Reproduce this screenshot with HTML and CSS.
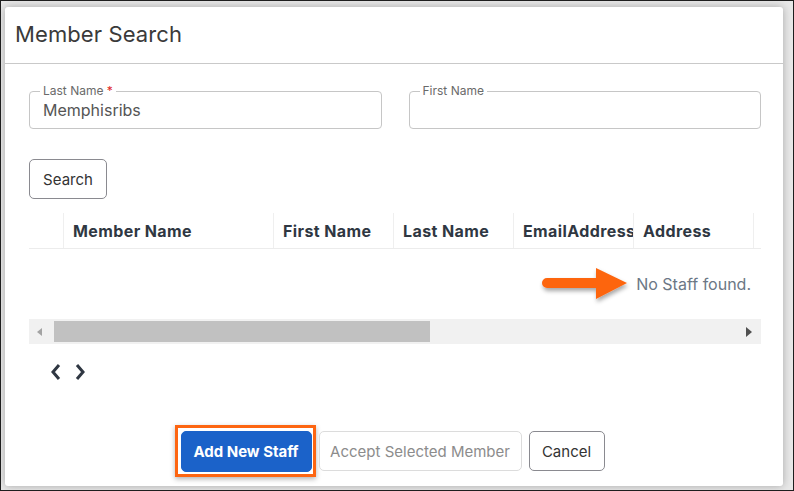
FILE: index.html
```html
<!DOCTYPE html>
<html lang="en">
<head>
  <meta charset="UTF-8">
  <title>Member Search</title>
  <link rel="stylesheet" href="styles.css">
</head>
<body>
  <div class="screen">
    <div class="modal">
      <div class="modal-header">
        <h1>Member Search</h1>
      </div>

      <div class="modal-body">
        <div class="fields">
          <div class="field">
            <label>Last Name <span class="req">*</span></label>
            <input type="text" value="Memphisribs">
          </div>
          <div class="field">
            <label>First Name</label>
            <input type="text" value="">
          </div>
        </div>

        <button type="button" class="btn search-btn">Search</button>

        <div class="grid">
          <div class="grid-head">
            <div class="col col-check"></div>
            <div class="col col-wide">Member Name</div>
            <div class="col">First Name</div>
            <div class="col">Last Name</div>
            <div class="col">EmailAddress</div>
            <div class="col">Address</div>
          </div>
          <div class="grid-empty">
            <svg class="callout-arrow" width="96" height="44" viewBox="0 0 96 44">
              <defs>
                <filter id="sh" x="-20%" y="-30%" width="140%" height="170%">
                  <feDropShadow dx="1" dy="3" stdDeviation="2" flood-color="#000" flood-opacity="0.35"/>
                </filter>
              </defs>
              <g filter="url(#sh)">
                <path d="M8 15 H57 V5 L88 20 L57 36 V25 H8 A5 5 0 0 1 8 15 Z" fill="#fd6511"/>
              </g>
            </svg>
            <span class="empty-text">No Staff found.</span>
          </div>
          <div class="hscroll">
            <span class="arrow-left"></span>
            <span class="thumb"></span>
            <span class="arrow-right"></span>
          </div>
        </div>

        <div class="pager">
          <svg width="12" height="18" viewBox="0 0 12 18"><path d="M9 2 L3 9 L9 16" fill="none" stroke="#2f3742" stroke-width="3"/></svg>
          <svg width="12" height="18" viewBox="0 0 12 18"><path d="M3 2 L9 9 L3 16" fill="none" stroke="#2f3742" stroke-width="3"/></svg>
        </div>
      </div>

      <div class="modal-footer">
        <span class="highlight">
          <button type="button" class="btn btn-primary">Add New Staff</button>
        </span>
        <button type="button" class="btn btn-disabled">Accept Selected Member</button>
        <button type="button" class="btn btn-cancel">Cancel</button>
      </div>
    </div>
  </div>
</body>
</html>
```

FILE: styles.css
```css
* {
  box-sizing: border-box;
}

body {
  margin: 0;
  font-family: 'Inter', 'Liberation Sans', sans-serif;
  background: #fff;
}

.screen {
  width: 794px;
  height: 491px;
  border: 1px solid #1e1e1e;
  background: #e8e8e8;
  padding: 6px 10px 4px 4px;
  overflow: hidden;
}

.modal {
  height: 100%;
  background: #fff;
  border-radius: 3px;
  box-shadow: 0 0 9px rgba(0, 0, 0, 0.28);
  display: flex;
  flex-direction: column;
}

.modal-header {
  height: 57px;
  border-bottom: 1px solid #c9c9c9;
  display: flex;
  align-items: center;
  padding-left: 10px;
}

.modal-header h1 {
  margin: 0 0 2px;
  font-size: 22px;
  font-weight: 400;
  color: #3a3a3a;
  letter-spacing: 0.1px;
}

.modal-body {
  padding: 27px 22px 0 24px;
  flex: 1;
}

.fields {
  display: flex;
  gap: 27px;
}

.field {
  position: relative;
  flex: 1;
  height: 38px;
  border: 1px solid #c6c6c6;
  border-radius: 4px;
}

.field label {
  position: absolute;
  top: -8px;
  left: 10px;
  padding: 0 3px;
  background: #fff;
  font-size: 12px;
  line-height: 14px;
  color: #6a6a6a;
}

.field .req {
  color: #e02424;
}

.field input {
  border: none;
  outline: none;
  width: 100%;
  height: 100%;
  padding: 0 13px;
  font-family: inherit;
  font-size: 16px;
  color: #555;
  background: transparent;
}

.btn {
  flex-shrink: 0;
  font-family: inherit;
  font-size: 15px;
  height: 40px;
  padding: 0 8px;
  white-space: nowrap;
  background: #fff;
  color: #333;
  border: 1px solid #8a8a90;
  border-radius: 5px;
  cursor: pointer;
}

.search-btn {
  margin-top: 30px;
  width: 78px;
}

.grid {
  margin-top: 14px;
}

.grid-head {
  display: flex;
  height: 36px;
  border-bottom: 1px solid #ececec;
}

.col {
  flex-shrink: 0;
  width: 120px;
  padding: 0 9px;
  border-right: 1px solid #efefef;
  font-size: 16px;
  font-weight: 700;
  letter-spacing: 0.4px;
  color: #2f3742;
  line-height: 36px;
  white-space: nowrap;
  overflow: hidden;
}

.col-check {
  width: 35px;
}

.col-wide {
  width: 210px;
}

.grid-empty {
  position: relative;
  height: 70px;
  display: flex;
  justify-content: flex-end;
  align-items: center;
  padding-right: 10px;
}

.empty-text {
  font-size: 16px;
  color: #6b7785;
}

.callout-arrow {
  position: absolute;
  left: 510px;
  top: 14px;
}

.hscroll {
  height: 25px;
  background: #f1f1f1;
  display: flex;
  align-items: center;
  padding: 0 9px 0 8px;
}

.arrow-left {
  width: 0;
  height: 0;
  border-top: 4px solid transparent;
  border-bottom: 4px solid transparent;
  border-right: 5px solid #a3a3a3;
}

.thumb {
  margin-left: 12px;
  width: 376px;
  height: 21px;
  background: #c1c1c1;
}

.arrow-right {
  margin-left: auto;
  width: 0;
  height: 0;
  border-top: 5px solid transparent;
  border-bottom: 5px solid transparent;
  border-left: 6px solid #505050;
}

.pager {
  display: flex;
  gap: 12px;
  margin-top: 19px;
  padding-left: 21px;
}

.modal-footer {
  display: flex;
  justify-content: center;
  align-items: center;
  gap: 7px;
  padding: 0 9px 9px 0;
}

.highlight {
  display: inline-flex;
  flex-shrink: 0;
  border: 3px solid #fd6511;
  padding: 3px 1px 2px 3px;
  margin-right: -4px;
  box-shadow: 0 2px 5px rgba(0, 0, 0, 0.3);
}

.btn-primary {
  width: 131px;
  height: 41px;
  background: #1b62c9;
  border-color: #1b62c9;
  color: #fff;
  font-weight: 700;
}

.btn-disabled {
  width: 203px;
  color: #8c8c8c;
  border-color: #dcdcdc;
}

.btn-cancel {
  width: 76px;
}
```
